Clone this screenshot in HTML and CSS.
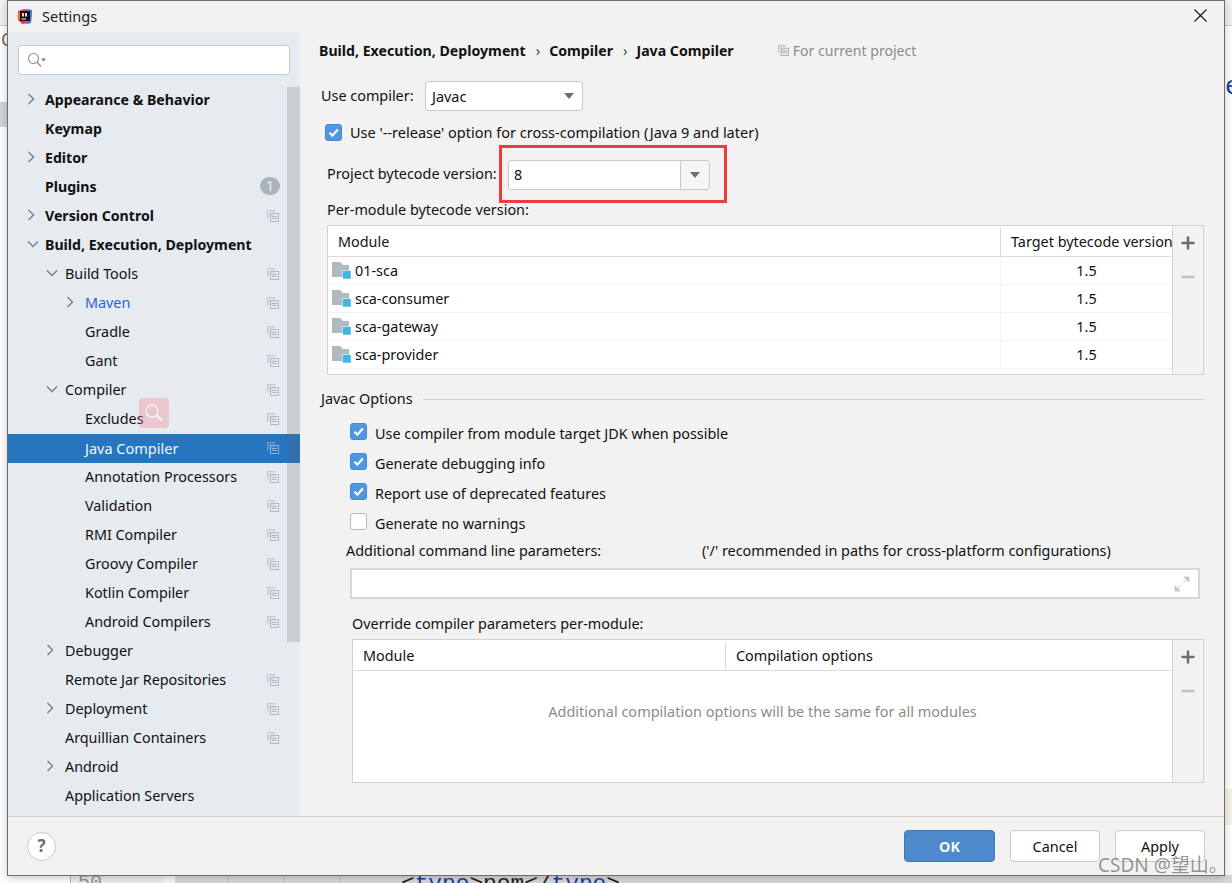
FILE: index.html
```html
<!DOCTYPE html>
<html lang="en">
<head>
<meta charset="utf-8">
<title>Settings</title>
<link rel="stylesheet" href="styles.css">
</head>
<body>
<svg class="defs" width="0" height="0">
  <symbol id="copy" viewBox="0 0 12 12"><path d="M.5 8.500v-8h8" fill="none" stroke="currentColor" stroke-opacity=".7"/><rect x="1" y="1" width="7" height="7" fill="currentColor" fill-opacity=".2"/><rect x="3.500" y="3.500" width="8" height="8" fill="none" stroke="currentColor"/><path d="M5 6.500h5M5 8.500h5" stroke="currentColor"/></symbol>
  <symbol id="right" viewBox="0 0 10 12"><path d="M.5 1l5 5-5 5" fill="none" stroke="currentColor" stroke-width="1.400"/></symbol>
  <symbol id="down" viewBox="0 0 12 10"><path d="M1 2.500l5 5 5-5" fill="none" stroke="currentColor" stroke-width="1.400"/></symbol>
  <symbol id="check" viewBox="0 0 17 17"><rect x=".5" y=".5" width="16" height="16" rx="2.500" fill="#4f97e0" stroke="#4389d6"/><path d="M4.500 8.800l2.900 2.900L12.800 5.500" fill="none" stroke="#fff" stroke-width="2.200"/></symbol>
  <symbol id="folder" viewBox="0 0 19 17"><path d="M0 0h8l3 3h6v12H0z" fill="#aeb9c0"/><rect x="10.500" y="8.500" width="8.500" height="8.500" fill="#40b6e0" stroke="#f4f8fa" stroke-width=".6"/></symbol>
  <symbol id="plus" viewBox="0 0 14 14"><path d="M7 .5v13M.5 7h13" stroke="currentColor" stroke-width="2.500"/></symbol>
  <symbol id="minus" viewBox="0 0 14 14"><path d="M.5 7h13" stroke="currentColor" stroke-width="2.500"/></symbol>
</svg>

<div class="backdrop">
  <i class="bd-top"></i>
  <span class="bd-c">C</span>
  <span class="bd-e">e</span>
  <i class="bd-block"></i>
  <i class="bd-beige"></i>
  <i class="bd-strip"></i>
  <span class="bd-50">50</span>
  <span class="bd-code">&lt;<em>type</em>&gt;pom&lt;/<em>type</em>&gt;</span>
</div>

<div class="dialog">
  <header class="titlebar">
    <svg class="logo" width="16" height="16" viewBox="0 0 16 16"><path d="M1 3l6-2 8 1-1 13-9 1-4-4z" fill="#fe315d"/><path d="M9 1l6 1-1 13-4 1z" fill="#3b7ff0"/><path d="M0 8l3-5 3 2-2 9z" fill="#f97a12"/><rect x="3" y="3" width="10" height="10" fill="#111"/><path d="M4.500 11h4.500" stroke="#fff"/><path d="M5 5h2v3.500H5zM8 5h2v3.500H8z" fill="#ddd"/></svg>
    <span class="title">Settings</span>
    <svg class="close" width="13" height="13" viewBox="0 0 13 13"><path d="M.5.500l12 12M12.500.500l-12 12" stroke="#111" stroke-width="1.100"/></svg>
  </header>

  <div class="main">
    <aside class="side">
      <div class="search">
        <svg width="20" height="16" viewBox="0 0 20 16"><circle cx="6.500" cy="6.500" r="5" fill="none" stroke="#8b8f93" stroke-width="1.100"/><path d="M10 10l4 4.500" stroke="#8b8f93" stroke-width="1.300"/><path d="M14 6.500h5l-2.500 3z" fill="#777"/></svg>
      </div>
      <ul class="tree">
        <li class="row bold l0"><svg class="arr"><use href="#right"/></svg>Appearance &amp; Behavior</li>
        <li class="row bold l0">Keymap</li>
        <li class="row bold l0"><svg class="arr"><use href="#right"/></svg>Editor</li>
        <li class="row bold l0">Plugins<span class="badge">1</span></li>
        <li class="row bold l0"><svg class="arr"><use href="#right"/></svg>Version Control<svg class="cp"><use href="#copy"/></svg></li>
        <li class="row bold l0"><svg class="arr"><use href="#down"/></svg>Build, Execution, Deployment</li>
        <li class="row l1"><svg class="arr"><use href="#down"/></svg>Build Tools<svg class="cp"><use href="#copy"/></svg></li>
        <li class="row l2 link"><svg class="arr"><use href="#right"/></svg>Maven<svg class="cp"><use href="#copy"/></svg></li>
        <li class="row l2">Gradle<svg class="cp"><use href="#copy"/></svg></li>
        <li class="row l2">Gant<svg class="cp"><use href="#copy"/></svg></li>
        <li class="row l1"><svg class="arr"><use href="#down"/></svg>Compiler<svg class="cp"><use href="#copy"/></svg></li>
        <li class="row l2">Excludes<svg class="cp"><use href="#copy"/></svg></li>
        <li class="row l2 sel">Java Compiler<svg class="cp"><use href="#copy"/></svg></li>
        <li class="row l2">Annotation Processors<svg class="cp"><use href="#copy"/></svg></li>
        <li class="row l2">Validation<svg class="cp"><use href="#copy"/></svg></li>
        <li class="row l2">RMI Compiler<svg class="cp"><use href="#copy"/></svg></li>
        <li class="row l2">Groovy Compiler<svg class="cp"><use href="#copy"/></svg></li>
        <li class="row l2">Kotlin Compiler<svg class="cp"><use href="#copy"/></svg></li>
        <li class="row l2">Android Compilers<svg class="cp"><use href="#copy"/></svg></li>
        <li class="row l1"><svg class="arr"><use href="#right"/></svg>Debugger</li>
        <li class="row l1">Remote Jar Repositories<svg class="cp"><use href="#copy"/></svg></li>
        <li class="row l1"><svg class="arr"><use href="#right"/></svg>Deployment<svg class="cp"><use href="#copy"/></svg></li>
        <li class="row l1">Arquillian Containers<svg class="cp"><use href="#copy"/></svg></li>
        <li class="row l1"><svg class="arr"><use href="#right"/></svg>Android</li>
        <li class="row l1">Application Servers</li>
      </ul>
      <div class="scroll"></div>
      <div class="lens">
        <svg width="20" height="20" viewBox="0 0 20 20"><circle cx="8" cy="8" r="6" fill="none" stroke="#f7f7f7" stroke-width="1.300"/><path d="M12.500 12.500l5 5" stroke="#f7f7f7" stroke-width="2"/></svg>
      </div>
    </aside>

    <section class="content">
      <div class="crumbs">
        <b>Build, Execution, Deployment</b><span class="sep">›</span><b>Compiler</b><span class="sep">›</span><b>Java Compiler</b>
        <span class="scope"><svg width="11" height="11"><use href="#copy"/></svg>For current project</span>
      </div>

      <div class="compiler-row">
        <span class="compiler-label">Use compiler:</span>
        <div class="combo c-javac">Javac<i class="tri"></i></div>
      </div>

      <label class="chk release"><svg class="box"><use href="#check"/></svg>Use '--release' option for cross-compilation (Java 9 and later)</label>

      <div class="bytecode-row">
        <span class="bytecode-label">Project bytecode version:</span>
        <div class="redbox">
          <div class="combo c-8"><span class="val">8</span><span class="drop"><i class="tri"></i></span></div>
        </div>
      </div>

      <p class="per-label">Per-module bytecode version:</p>

      <div class="tbl tbl-a">
        <div class="tbl-main">
          <div class="thead"><span class="c1">Module</span><span class="c2">Target bytecode version</span></div>
          <div class="tr"><span class="c1"><svg class="fld"><use href="#folder"/></svg>01-sca</span><span class="c2">1.5</span></div>
          <div class="tr"><span class="c1"><svg class="fld"><use href="#folder"/></svg>sca-consumer</span><span class="c2">1.5</span></div>
          <div class="tr"><span class="c1"><svg class="fld"><use href="#folder"/></svg>sca-gateway</span><span class="c2">1.5</span></div>
          <div class="tr"><span class="c1"><svg class="fld"><use href="#folder"/></svg>sca-provider</span><span class="c2">1.5</span></div>
        </div>
        <div class="tools"><svg class="plus"><use href="#plus"/></svg><svg class="minus"><use href="#minus"/></svg></div>
      </div>

      <div class="group"><span>Javac Options</span><i></i></div>

      <div class="opts">
        <label class="chk"><svg class="box"><use href="#check"/></svg>Use compiler from module target JDK when possible</label>
        <label class="chk"><svg class="box"><use href="#check"/></svg>Generate debugging info</label>
        <label class="chk"><svg class="box"><use href="#check"/></svg>Report use of deprecated features</label>
        <label class="chk"><i class="box empty"></i>Generate no warnings</label>
      </div>

      <div class="add-label"><span class="add-name">Additional command line parameters:</span><span class="hint">('/' recommended in paths for cross-platform configurations)</span></div>
      <div class="cmd-input">
        <svg width="16" height="16" viewBox="0 0 16 16"><path d="M9.500 6.500L15 1M15 1h-5l5 5zM6.500 9.500L1 15M1 15h5l-5-5z" stroke="#c4c8cb" fill="#c4c8cb"/></svg>
      </div>

      <p class="ovr-label">Override compiler parameters per-module:</p>
      <div class="tbl tbl-b">
        <div class="tbl-main">
          <div class="thead"><span class="c1">Module</span><span class="c2">Compilation options</span></div>
          <div class="empty-msg">Additional compilation options will be the same for all modules</div>
        </div>
        <div class="tools"><svg class="plus"><use href="#plus"/></svg><svg class="minus"><use href="#minus"/></svg></div>
      </div>
    </section>
  </div>

  <footer class="foot">
    <span class="help">?</span>
    <div class="btns">
      <button class="btn ok">OK</button>
      <button class="btn">Cancel</button>
      <button class="btn">Apply</button>
    </div>
  </footer>
</div>

<div class="mark">CSDN @望山。</div>
</body>
</html>
```

FILE: styles.css
```css
* { box-sizing: border-box; }
html, body { margin: 0; height: 100%; }
body {
  width: 1232px; height: 883px; overflow: hidden; position: relative;
  background: #fff;
  font: 14.400px/20px "Noto Sans", "Noto Sans CJK SC", sans-serif;
  color: #111;
}
.defs { position: absolute; }
svg { display: block; flex: none; }
ul, p { margin: 0; padding: 0; list-style: none; }

/* what shows of the IDE behind the dialog */
.backdrop { position: absolute; inset: 0; overflow: hidden; }
.backdrop > * { position: absolute; }
.bd-top { left: 0; top: 0; width: 100%; height: 26px; background: #f2f2f2; border-bottom: 1px solid #cfcfcf; }
.bd-c { left: 1px; top: 29px; font-size: 18px; color: #666; }
.bd-e { left: 1225px; top: 72px; font: 26px/30px "Liberation Mono", monospace; color: #1440a8; }
.bd-block { left: 0; top: 102px; width: 8px; height: 25px; background: #d4d4d4; }
.bd-beige { left: 1224px; top: 789px; width: 8px; height: 36px; background: #f6f4e8; }
.bd-strip {
  left: 70px; top: 875px; width: 1162px; height: 8px; border-left: 1px solid #bbb;
  background:
    linear-gradient(#c6c6c6, #c6c6c6) 156px 0 / 1px 100% no-repeat,
    linear-gradient(#c6c6c6, #c6c6c6) 213px 0 / 1px 100% no-repeat,
    linear-gradient(#c6c6c6, #c6c6c6) 269px 0 / 1px 100% no-repeat,
    linear-gradient(90deg, #f0f0f0 93px, #fafafa 93px, #fafafa 104px, #d9d9d9 104px);
}
.bd-50 { left: 78px; top: 872px; font: 20px/22px "Liberation Mono", monospace; color: #999; }
.bd-code { left: 401px; top: 871px; font: 22.800px/26px "Liberation Mono", monospace; color: #222; white-space: nowrap; }
.bd-code em { font-style: normal; color: #1440a8; }

.dialog {
  position: absolute; left: 7px; top: 0; width: 1218px; height: 876px;
  display: flex; flex-direction: column;
  background: #f2f2f2; border: 1px solid #6e6e6e;
  box-shadow: 0 2px 8px rgba(0, 0, 0, .22);
}
.titlebar { height: 31px; display: flex; align-items: center; padding: 0 17px 2px 9px; flex: none; }
.logo { margin-right: 9px; }
.title { flex: 1; font-size: 14.500px; color: #222; }

.main { flex: 1; display: flex; min-height: 0; }

/* sidebar */
.side { width: 292px; flex: none; position: relative; background: #e6ebf0; padding-top: 13px; overflow: hidden; font-size: 14.350px; }
.search {
  margin: 0 10px; height: 30px; background: #fff; border: 1px solid #c8ccd0; border-radius: 3px;
  display: flex; align-items: center; padding-left: 8px;
}
.tree { margin-top: 11px; }
.row { height: 29px; display: flex; align-items: center; position: relative; white-space: nowrap; padding-bottom: 2px; }
.row.bold { font-weight: 700; font-size: 14.150px; }
.l0 { padding-left: 37px; }
.l1 { padding-left: 57px; }
.l2 { padding-left: 77px; }
.arr { position: absolute; width: 12px; height: 12px; color: #7b7f83; top: 7px; }
.l0 .arr { left: 19px; }
.l1 .arr { left: 38px; }
.l2 .arr { left: 58px; }
.cp { position: absolute; left: 259px; top: 8px; width: 12px; height: 12px; color: #b3b9bf; }
.link { color: #2a62d6; }
.sel { background: #2675bf; color: #f2f6fb; z-index: 1; font-size: 14.500px; }
.sel .cp { color: #8fb3d9; }
.badge {
  position: absolute; left: 252px; top: 4px; width: 20px; height: 18px; border-radius: 9px;
  background: #aab4bb; color: #f2f4f6; font-size: 14px; line-height: 18px; text-align: center; font-weight: 400;
}
.scroll { position: absolute; right: 0; top: 55px; width: 13px; height: 555px; background: rgba(90, 95, 105, .2); z-index: 2; }
.lens {
  position: absolute; left: 131px; top: 366px; width: 30px; height: 30px; border-radius: 4px;
  background: rgba(240, 130, 140, .35); display: flex; align-items: center; justify-content: center; z-index: 2;
}

/* right panel */
.content { flex: 1; min-width: 0; padding-left: 19px; }
.crumbs { height: 37px; display: flex; align-items: center; }
.crumbs b { font-weight: 700; font-size: 14.150px; }
.sep { margin: 0 9px 0 10px; color: #444; }
.scope { margin-left: 44px; display: flex; align-items: center; gap: 4px; color: #8c8c8c; font-size: 14.100px; }
.scope svg { color: #a8a8a8; }

.combo { background: #fff; border: 1px solid #c9c9c9; border-radius: 3px; display: flex; align-items: center; height: 30px; position: relative; }
.tri { width: 0; height: 0; border: 5.500px solid transparent; border-top: 6px solid #6e6e6e; border-bottom: 0; display: block; }

.compiler-row { display: flex; align-items: center; height: 30px; margin: 12px 0 0 2px; }
.compiler-label { width: 104px; flex: none; }
.c-javac { width: 158px; padding: 1px 0 0 6px; }
.c-javac .tri { position: absolute; right: 8px; top: 11px; }

.chk { display: flex; align-items: center; height: 20px; }
.box { width: 17px; height: 17px; margin-right: 8px; }
.box.empty { display: block; background: #fff; border: 1px solid #b9b9b9; border-radius: 3px; }
.release { margin: 11px 0 0 6px; font-size: 14.500px; }

.bytecode-row { display: flex; align-items: center; height: 58px; margin: 3px 0 0 8px; }
.bytecode-label { width: 172px; flex: none; }
.redbox {
  width: 228px; height: 58px; border: 3px solid #f03a3e;
  padding: 12px 0 0 6px;
}
.c-8 { width: 202px; }
.val { flex: 1; padding-left: 5px; }
.drop { width: 29px; height: 100%; border-left: 1px solid #c9c9c9; background: #f5f5f5; border-radius: 0 3px 3px 0; display: flex; align-items: center; justify-content: center; }

.per-label { margin: -3px 0 0 8px; height: 25px; }

.tbl { display: flex; background: #fff; border: 1px solid #d2d2d2; }
.tbl-a { margin-left: 8px; width: 877px; height: 150px; }
.tbl-b { margin: 5px 0 0 33px; width: 852px; height: 144px; }
.tbl-main { flex: 1; min-width: 0; display: flex; flex-direction: column; overflow: hidden; }
.tools { width: 31px; flex: none; background: #f2f2f2; border-left: 1px solid #d2d2d2; display: flex; flex-direction: column; align-items: center; padding-top: 10px; gap: 20px; }
.plus { width: 14px; height: 14px; color: #6e6e6e; }
.minus { width: 14px; height: 14px; color: #c0c0c0; }
.thead { height: 31px; display: flex; align-items: center; flex: none; border-bottom: 1px solid #dcdcdc; white-space: nowrap; padding-top: 1px; }
.tr { height: 28px; display: flex; align-items: center; flex: none; border-bottom: 1px solid #f2f2f2; }
.tbl-a .c1 { width: 672px; flex: none; padding-left: 10px; display: flex; align-items: center; }
.tbl-a .c2 { flex: 1; }
.tbl-a .thead .c2 { padding-left: 10px; border-left: 1px solid #d8d8d8; height: 28px; line-height: 28px; }
.tbl-a .tr .c1 { padding-left: 4px; }
.tbl-a .tr .c2 { text-align: center; height: 100%; line-height: 27px; border-left: 1px solid #f2f2f2; }
.fld { width: 19px; height: 17px; margin-right: 4px; }
.tbl-b .c1 { width: 372px; flex: none; padding-left: 10px; }
.tbl-b .thead .c2 { padding-left: 10px; border-left: 1px solid #d8d8d8; height: 28px; line-height: 28px; }
.empty-msg { flex: 1; display: flex; align-items: center; justify-content: center; color: #8c8c8c; padding-bottom: 32px; font-size: 14.500px; }

.group { display: flex; align-items: center; margin: 14px 0 0 2px; height: 20px; }
.group i { flex: 1; height: 1px; background: #d2d2d2; margin: 0 20px 0 10px; }

.opts { margin: 15px 0 0 31px; display: flex; flex-direction: column; gap: 10px; }
.opts .box { margin-bottom: 5px; }
.add-label { margin: 7px 0 0 27px; height: 20px; display: flex; }
.add-name { width: 356px; flex: none; }
.cmd-input {
  margin: 7px 0 0 31px; width: 850px; height: 31px; background: #fff; border: 2px solid #d6d6d6;
  display: flex; align-items: center; justify-content: flex-end; padding-right: 8px;
}
.ovr-label { margin: 15px 0 0 33px; height: 20px; }

/* footer */
.foot {
  flex: none; height: 59px; border-top: 1px solid #d2d2d2; display: flex; align-items: center;
  justify-content: space-between; padding: 0 19px 0 19px;
}
.help {
  width: 29px; height: 29px; border-radius: 50%; background: #fff; border: 1px solid #c9c9c9;
  display: flex; align-items: center; justify-content: center; font-weight: 700; font-size: 17px; color: #6e6e6e;
}
.btns { display: flex; gap: 15px; }
.btn {
  width: 90px; height: 32px; background: #fff; border: 1.500px solid #c9c9c9; border-radius: 4px;
  font: inherit; color: #111; padding: 1px 0 0;
}
.ok { width: 91px; background: #4e89c9; border-color: #3f79b8; color: #f4f8fc; font-weight: 700; }

.mark {
  position: absolute; left: 1098px; top: 853px; font-size: 19px; line-height: 24px;
  color: rgba(110, 110, 110, .72); white-space: nowrap;
  font-family: "Noto Sans", "Noto Sans CJK SC", sans-serif;
}
```
